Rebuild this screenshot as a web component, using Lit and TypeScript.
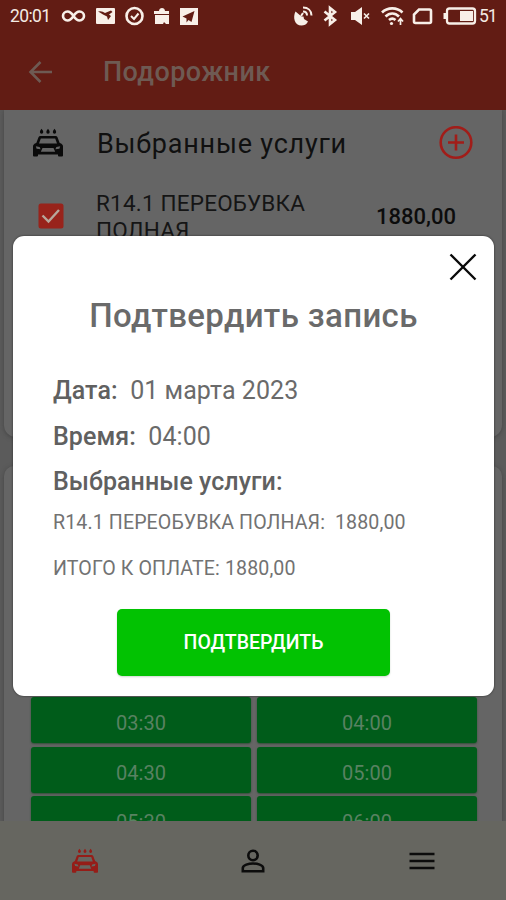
import { LitElement, html, css, svg } from "lit";
import { customElement } from "lit/decorators.js";

const carShape = svg`
  <path d="M8.500 .8q1.800 2 1.800 3.200a1.700 1.700 0 0 1-3.400 0q0-1.200 1.600-3.200zM15 .8q1.700 2 1.700 3.200a1.700 1.700 0 0 1-3.400 0q0-1.200 1.700-3.200zM21.500 .8q1.700 2 1.700 3.200a1.700 1.700 0 0 1-3.400 0q0-1.200 1.700-3.200z"/>
  <path fill-rule="evenodd" d="M7.500 8h15q1.500 0 2 1.300l2.200 5.700q3.300 1 3.300 3.500v9q0 1-1 1h-3q-1 0-1-1v-1h-20v1q0 1-1 1h-3q-1 0-1-1v-9q0-2.500 3.300-3.500l2.200-5.700q.5-1.300 2-1.300zM7.800 10.500l-1.800 5h18l-1.800-5zM2.800 18.200l.8 2.500 4 .6-1-2.300zM27.200 18.200l-.8 2.500-4 .6 1-2.300zM9.500 20l-1.700 3.800h14.400l-1.700-3.800z"/>`;

@customElement("app-root")
export class AppRoot extends LitElement {
  static styles = css`
    :host {
      display: block;
      position: relative;
      width: 506px;
      height: 900px;
      overflow: hidden;
      background: #5b5b5b;
      font-family: Roboto, "Liberation Sans", sans-serif;
      white-space: nowrap;
    }
    svg { display: block; flex: none; }
    .page { display: flex; flex-direction: column; height: 900px; }
    .top { height: 110px; flex: none; background: #621c14; }
    .status {
      display: flex; align-items: center; justify-content: space-between;
      height: 32px; padding: 0 9px 0 10px; color: #f4ebe4; font-size: 18px;
    }
    .status div { display: flex; align-items: center; }
    .clock { width: 51px; font-size: 17.500px; letter-spacing: -0.6px; }
    .pct { font-size: 17.500px; letter-spacing: -1.200px; width: 18px; }
    .bar { display: flex; align-items: center; height: 79px; padding-left: 27px; }
    .bar h1 { margin: 1px 0 0 50px; font-size: 27px; font-weight: 500; line-height: 36px; color: #6e5a53; letter-spacing: .4px; }
    .body { flex: 1; min-height: 0; overflow: hidden; padding: 0 4px; }
    .card { background: #656565; box-shadow: 0 1px 4px #454545; border-radius: 10px; }
    .chosen { height: 327px; border-radius: 0 0 12px 12px; }
    .slots { margin-top: 29px; height: 500px; padding: 231px 25px 0 27px; box-sizing: border-box; }
    .head { display: flex; align-items: center; height: 65px; padding: 0 29px 0 29px; }
    .head h2 { flex: 1; margin: 2px 0 0 34px; font-size: 27px; font-weight: 400; color: #101010; letter-spacing: .78px; }
    .service { display: flex; align-items: flex-start; padding: 14px 46px 0 34px; }
    .check { margin-top: 14px; }
    .name { flex: 1; margin: 1px 0 0 32px; font-size: 22.500px; line-height: 26.500px; letter-spacing: .2px; color: #151515; }
    .price { font-size: 22px; font-weight: 500; line-height: 28px; margin-top: 14px; color: #0c0c0c; }
    .grid { display: grid; grid-template-columns: 1fr 1fr; gap: 3.500px 6px; }
    .slot {
      height: 46px; border-radius: 3px; background: #005c1a; color: #598262;
      font-size: 20px; line-height: 53px; text-align: center; box-shadow: 0 1px 2px #33503a;
    }
    .nav { flex: none; height: 79px; display: grid; grid-template-columns: repeat(3, 1fr); background: #666660; }
    .nav div { display: flex; justify-content: center; padding: 27px 0 0 1px; }
    .dialog {
      position: absolute; left: 13px; top: 236px; width: 481px; height: 460px; box-sizing: border-box;
      padding: 0 40px; border-radius: 11px; background: #fff; color: #5f5f5f;
      box-shadow: 0 0 2px #222; display: flex; flex-direction: column;
    }
    .close { align-self: flex-end; margin: 17px -23px 0 0; height: 28px; }
    .dialog h3 { margin: 15px 0 0; font-size: 33px; font-weight: 500; line-height: 40px; letter-spacing: .37px; text-align: center; color: #6a6a6a; }
    .line { font-size: 25px; line-height: 46px; height: 45.500px; color: #6a6a6a; white-space: pre; letter-spacing: .06px; }
    .first { margin-top: 32px; }
    .line b { font-weight: 500; color: #606060; }
    .small { font-size: 19.600px; line-height: 46px; height: 46px; color: #727272; white-space: pre; letter-spacing: .11px; }
    .smallfirst { margin-top: -5px; }
    .ok {
      align-self: center; margin-top: 17px; width: 273px; height: 67px; flex: none; border: 0; padding: 0;
      border-radius: 5px; background: #02c202; color: #fff; font: 500 19.500px Roboto, sans-serif;
      box-shadow: 0 1px 2px #cfd8cf;
    }
  `;

  render() {
    return html`
      <div class="page">
        <div class="top">
          <div class="status">
            <div>
              <span class="clock">20:01</span>
              <svg width="140" height="24" viewBox="61 4 140 24" fill="none" stroke="#f8efe8" stroke-width="2.600">
                <path d="M73.500 16c-2-3-3.500-4.500-6-4.500a4.500 4.500 0 0 0 0 9c2.500 0 4-1.500 6-4.500s3.500-4.500 6-4.500a4.500 4.500 0 0 1 0 9c-2.500 0-4-1.500-6-4.500z"/>
                <path fill="#f8efe8" stroke="none" d="M97 8h17q1 0 1 1v14q0 1-1 1h-17q-1 0-1-1v-14q0-1 1-1z"/>
                <path fill="#621c14" stroke="none" d="M98 11.500q4-1 7 1.500l6-2.500 1.500 1.500-3.500 2.500 2 1.500-3 4-1-3.500-4-2q-3-2-5-3z"/>
                <circle cx="134.500" cy="16" r="8"/>
                <path d="M131 16l3 3 4.500-5.500" stroke-width="2"/>
                <path fill="#f8efe8" stroke="none" d="M154 11h5c0-4 6-4 6 0h4v3h-15zM155 15h14v9h-3l-2-2-1 2h-8z"/>
                <path fill="#f8efe8" stroke="none" d="M180 8h18v17h-18z"/>
                <path fill="#621c14" stroke="none" d="M182.500 16.500l12-5.500-3 11-3-2-2 2.500v-4z"/>
              </svg>
            </div>
            <div>
              <svg width="187" height="26" viewBox="292 3 187 26" fill="none" stroke="#f8efe8" stroke-width="2">
                <path fill="#f8efe8" stroke="none" d="M295.500 11.500l6 5 2 0 .5 2.500 4 2.500c-1.500 3-4 4-6.500 4-7 0-9-8-6-14z"/>
                <path d="M301 16l2-3M303 11.500c2.500 0 4 1.500 4 4M303 7.500c5 0 8.500 3 8.500 8"/>
                <path stroke-width="2.600" d="M324.500 11.500l10.500 8.500-5 4v-16l5 4-10.500 8.500"/>
                <path fill="#f8efe8" stroke="none" d="M351 12h4l7-5v18l-7-5h-4z"/>
                <path d="M364 13.500l5 5M369 13.500l-5 5" stroke-width="1.600"/>
                <path stroke-width="2.600" d="M382 12.500c5.500-5.500 15-5.500 20.500 0M385.500 16.500c4-4 9.500-4 13.500 0M389 20c2-1.800 4.500-1.800 6.500 0"/>
                <circle cx="391.500" cy="23.500" r="1.600" fill="#f8efe8" stroke="none"/>
                <path d="M400.500 25v-6M398 21.500l2.500-3 2.500 3" stroke-width="1.700"/>
                <path stroke-width="2.600" d="M419 9.500h10.500q1.500 0 1.500 1.500v10.500q0 1.500-1.500 1.500h-14q-1.500 0-1.500-1.500v-7z"/>
                <rect x="447" y="8.500" width="28" height="15" rx="2.500" stroke-width="2.300"/>
                <path fill="#f8efe8" stroke="none" d="M460 11h13v10h-13zM443.500 13h3v6h-3z"/>
              </svg>
              <span class="pct">51</span>
            </div>
          </div>
          <div class="bar">
            <svg width="26" height="24" viewBox="0 0 26 24" fill="none" stroke="#6e5a53" stroke-width="2.600">
              <path d="M25 12H4M13.500 2L3.500 12l10 10"/>
            </svg>
            <h1>Подорожник</h1>
          </div>
        </div>

        <div class="body">
          <div class="card chosen">
            <div class="head">
              <svg width="30" height="30" viewBox="0 0 30 30" fill="#0a0a0a">${carShape}</svg>
              <h2>Выбранные услуги</h2>
              <svg width="34" height="34" viewBox="0 0 34 34" fill="none" stroke="#a11d19" stroke-width="2.600">
                <circle cx="17" cy="16.500" r="15.300"/><path d="M17 8.500v16M9 16.500h16"/>
              </svg>
            </div>
            <div class="service">
              <svg class="check" width="26" height="26" viewBox="0 0 26 26">
                <rect x=".5" y=".5" width="25" height="25" rx="2.500" fill="#98231b"/>
                <path d="M4.500 12.500l6 6L21 7" fill="none" stroke="#b7a79b" stroke-width="2.400"/>
              </svg>
              <div class="name">R14.1 ПЕРЕОБУВКА<br />ПОЛНАЯ</div>
              <div class="price">1880,00</div>
            </div>
          </div>
          <div class="card slots">
            <div class="grid">
              ${["03:30", "04:00", "04:30", "05:00", "05:30", "06:00"].map((t) => html`<div class="slot">${t}</div>`)}
            </div>
          </div>
        </div>

        <div class="nav">
          <div><svg width="26" height="26" viewBox="0 0 30 30" fill="#951d18">${carShape}</svg></div>
          <div>
            <svg width="24" height="26" viewBox="0 0 24 26" fill="none" stroke="#0c0c0c" stroke-width="2.600">
              <circle cx="12" cy="7.500" r="4.700"/>
              <path d="M1.800 23.200v-3.200c0-3 6-4.500 10.200-4.500s10.200 1.500 10.200 4.500v3.200z"/>
            </svg>
          </div>
          <div>
            <svg width="26" height="26" viewBox="0 0 26 26" stroke="#0c0c0c" stroke-width="2.400">
              <path d="M.5 6h25M.5 13h25M.5 20h25"/>
            </svg>
          </div>
        </div>
      </div>

      <div class="dialog">
        <svg class="close" width="28" height="28" viewBox="0 0 28 28" stroke="#0a0a0a" stroke-width="2.400">
          <path d="M1.500 1.500l25 25M26.500 1.500l-25 25"/>
        </svg>
        <h3>Подтвердить запись</h3>
        <div class="line first"><b>Дата:</b>  01 марта 2023</div>
        <div class="line"><b>Время:</b>  04:00</div>
        <div class="line"><b>Выбранные услуги:</b></div>
        <div class="small smallfirst">R14.1 ПЕРЕОБУВКА ПОЛНАЯ:  1880,00</div>
        <div class="small">ИТОГО К ОПЛАТЕ: 1880,00</div>
        <button class="ok">ПОДТВЕРДИТЬ</button>
      </div>
    `;
  }
}
